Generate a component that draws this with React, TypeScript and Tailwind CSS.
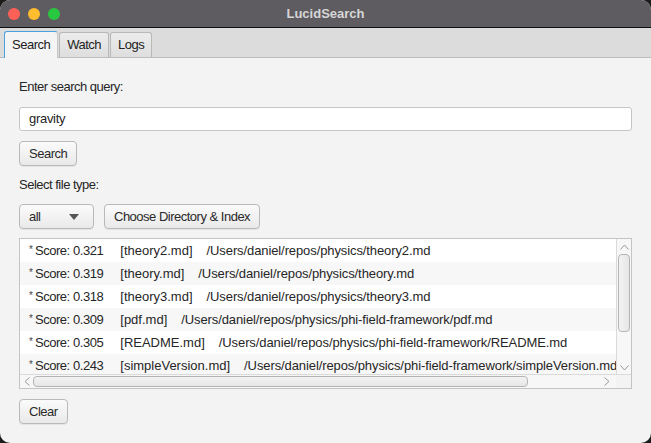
import React from 'react'

type Hit = {
  score: string;
  file: string;
  path: string;
}

const hits: Hit[] = [
  { score: '0.321', file: 'theory2.md', path: '/Users/daniel/repos/physics/theory2.md' },
  { score: '0.319', file: 'theory.md', path: '/Users/daniel/repos/physics/theory.md' },
  { score: '0.318', file: 'theory3.md', path: '/Users/daniel/repos/physics/theory3.md' },
  { score: '0.309', file: 'pdf.md', path: '/Users/daniel/repos/physics/phi-field-framework/pdf.md' },
  { score: '0.305', file: 'README.md', path: '/Users/daniel/repos/physics/phi-field-framework/README.md' },
  { score: '0.243', file: 'simpleVersion.md', path: '/Users/daniel/repos/physics/phi-field-framework/simpleVersion.md' },
]

const btn =
  'h-[25px] px-[9px] rounded-[4px] border border-[#b9b9b9] bg-gradient-to-b from-[#fbfbfb] to-[#e9e9e9] text-[13px] tracking-[-0.5px] text-[#2a2a2a] shadow-[0_1px_0_rgba(0,0,0,0.06)] flex items-center'

const tab = 'h-[25px] px-[7px] flex items-center text-[13px] tracking-[-0.5px] text-[#222] rounded-t-[3px]'

export default function App() {
  return (
    <div className="w-[651px] h-[443px] bg-[#1c1c1c] font-['Liberation_Sans',sans-serif]">
      <div className="w-full h-full rounded-[10px] overflow-hidden flex flex-col bg-[#f3f3f3]">
        {/* Title bar */}
        <div className="h-[28px] shrink-0 bg-[#5f5c61] border-b border-[#0e0e0e] flex items-center relative">
          <div className="flex items-center gap-[8px] pl-[8px]">
            <span className="w-[12px] h-[12px] rounded-full bg-[#fe5f57]" />
            <span className="w-[12px] h-[12px] rounded-full bg-[#febc2e]" />
            <span className="w-[12px] h-[12px] rounded-full bg-[#28c840]" />
          </div>
          <div className="absolute inset-0 flex items-center justify-center text-[13px] font-bold text-[#d6d6d6]">
            LucidSearch
          </div>
        </div>

        {/* Tabs */}
        <div className="h-[30px] shrink-0 bg-[#dcdcdc] border-b border-[#bdbdbd] flex items-end pl-[4px] gap-[1px]">
          <div className={tab + ' h-[27px] -mb-[1px] bg-[#f4f4f4] border-l border-t border-r border-l-[#4aa3df] border-t-[#4aa3df] border-r-[#c8c8c8]'}>
            Search
          </div>
          <div className={tab + ' bg-gradient-to-b from-[#ececec] to-[#dedede] border border-b-0 border-[#b8b8b8]'}>
            Watch
          </div>
          <div className={tab + ' bg-gradient-to-b from-[#ececec] to-[#dedede] border border-b-0 border-[#b8b8b8]'}>
            Logs
          </div>
        </div>

        {/* Content */}
        <div className="flex-1 flex flex-col px-[19px] pt-[21px] text-[13px] text-[#262626]">
          <div className="h-[16px] leading-[16px] tracking-[-0.5px]">Enter search query:</div>
          <div className="mt-[12px] h-[24px] bg-white border border-[#c6c6c6] rounded-[3px] px-[9px] flex items-center tracking-[-0.3px]">
            gravity
          </div>
          <div className="mt-[10px] flex">
            <div className={btn}>Search</div>
          </div>
          <div className="mt-[11px] h-[16px] leading-[16px] tracking-[-0.5px]">Select file type:</div>
          <div className="mt-[11px] flex gap-[10px]">
            <div className={btn + ' w-[75px] justify-between'}>
              <span>all</span>
              <svg width="10" height="6" viewBox="0 0 10 6" className="mr-[5px]">
                <path d="M0 0 L10 0 L5 6 Z" fill="#555" />
              </svg>
            </div>
            <div className={btn}>Choose Directory &amp; Index</div>
          </div>

          {/* Results list */}
          <div className="mt-[9px] h-[151px] border border-[#c4c4c4] bg-white flex flex-col">
            <div className="flex-1 flex min-h-0">
              <div className="flex-1 overflow-hidden">
                {hits.map((h, i) => (
                  <div
                    key={i}
                    className={`h-[23px] pl-[9px] flex items-center whitespace-pre ${i % 2 === 1 ? 'bg-[#f7f7f7]' : 'bg-white'}`}
                  >
                    <span className="text-[10px] text-[#444] mr-[2px] -mt-[3px]">*</span>
                    <span className="tracking-[-0.45px]">Score: {h.score}</span>
                    <span className="ml-[17px]">[{h.file}]</span>
                    <span className="ml-[14px] tracking-[-0.1px]">{h.path}</span>
                  </div>
                ))}
              </div>
              {/* vertical scrollbar */}
              <div className="w-[15px] bg-[#f7f7f7] border-l border-[#dadada] flex flex-col items-center">
                <svg width="9" height="6" viewBox="0 0 9 6" className="mt-[5px]">
                  <path d="M0.5 5.5 L4.5 1 L8.5 5.5" fill="none" stroke="#9a9a9a" strokeWidth="1" />
                </svg>
                <div className="mt-[4px] w-[12px] h-[78px] rounded-[4px] border border-[#b4b4b4] bg-gradient-to-r from-[#f3f3f3] to-[#e6e6e6]" />
                <div className="flex-1" />
                <svg width="9" height="6" viewBox="0 0 9 6" className="mb-[3px]">
                  <path d="M0.5 0.5 L4.5 5 L8.5 0.5" fill="none" stroke="#9a9a9a" strokeWidth="1" />
                </svg>
              </div>
            </div>
            {/* horizontal scrollbar */}
            <div className="h-[14px] flex bg-[#f7f7f7] border-t border-[#dadada]">
              <div className="flex-1 flex items-center">
                <svg width="6" height="9" viewBox="0 0 6 9" className="ml-[4px]">
                  <path d="M5.5 0.5 L1 4.5 L5.5 8.5" fill="none" stroke="#9a9a9a" strokeWidth="1" />
                </svg>
                <div className="ml-[3px] h-[11px] w-[495px] rounded-[4px] border border-[#b4b4b4] bg-gradient-to-b from-[#f3f3f3] to-[#e6e6e6]" />
                <div className="flex-1" />
                <svg width="6" height="9" viewBox="0 0 6 9" className="mr-[6px]">
                  <path d="M0.5 0.5 L5 4.5 L0.5 8.5" fill="none" stroke="#9a9a9a" strokeWidth="1" />
                </svg>
              </div>
              <div className="w-[15px] bg-[#f3f3f3]" />
            </div>
          </div>

          <div className="mt-[10px] flex">
            <div className={btn}>Clear</div>
          </div>
        </div>
      </div>
    </div>
  )
}
